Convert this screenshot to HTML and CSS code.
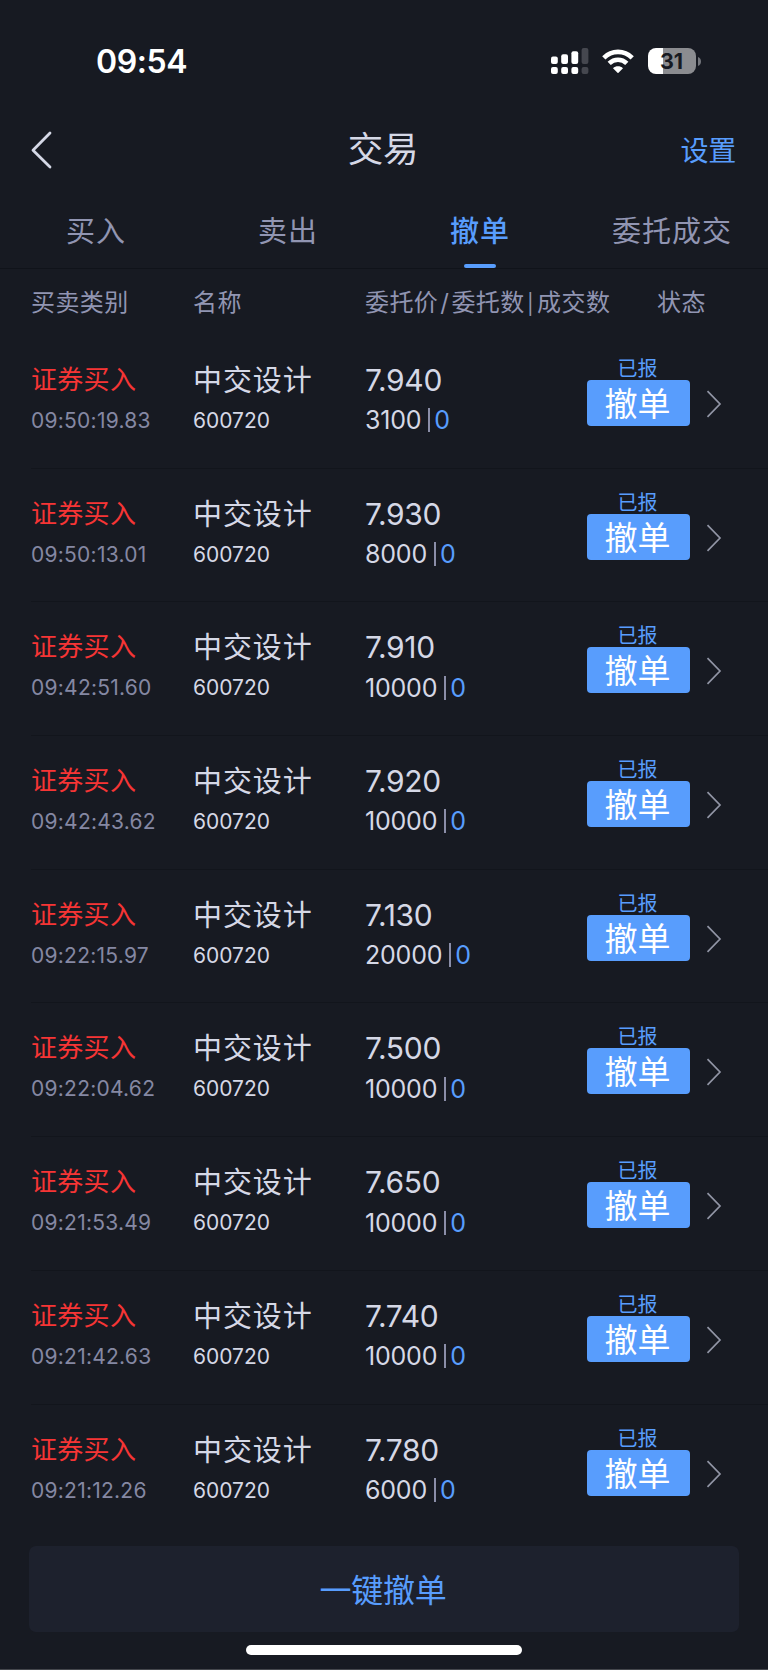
FILE: index.html
```html
<!DOCTYPE html>
<html lang="zh-CN">
<head>
<meta charset="utf-8">
<title>交易</title>
<link rel="stylesheet" href="styles.css">
</head>
<body>
<svg class="defs" width="0" height="0"><symbol id="next" viewBox="0 0 16 28"><path d="M1.5 1.2 14 14 1.5 26.8" fill="none" stroke="currentColor" stroke-width="1.7"/></symbol></svg>
<div class="screen">
  <header class="status">
    <span class="clock">09:54</span>
    <svg class="signal" width="38" height="27" viewBox="0 0 38 27" fill="#fff">
      <rect x="0" y="8.5" width="6.8" height="7.5" rx="2"/><rect x="10.2" y="6.3" width="6.8" height="9.7" rx="2"/><rect x="20.4" y="3.2" width="6.8" height="12.8" rx="2"/>
      <rect x="0" y="19" width="6.8" height="7" rx="2"/><rect x="10.2" y="19" width="6.8" height="7" rx="2"/><rect x="20.4" y="19" width="6.8" height="7" rx="2"/>
      <g fill="#45474f"><rect x="30.6" y="0" width="6.8" height="16" rx="2"/><rect x="30.6" y="19" width="6.8" height="7" rx="2"/></g>
    </svg>
    <svg class="wifi" width="32" height="25" viewBox="0 0 32 25">
      <g fill="none" stroke="#fff" stroke-width="4.6"><path d="M1.8 8.8C9.8 .9 22.2 .9 30.2 8.8"/><path d="M7.2 14.4C12.2 9.6 19.8 9.6 24.8 14.4"/></g>
      <path d="M11 19.2C13.8 16.6 18.2 16.6 21 19.2L16.5 23.8Q16 24.2 15.5 23.8Z" fill="#fff"/>
    </svg>
    <div class="battery"><span class="level">31</span><svg width="3" height="9" viewBox="0 0 3 9"><path d="M0 0C4 1.5 4 7.5 0 9Z" fill="#74767c"/></svg></div>
  </header>
  <nav class="bar">
    <svg class="back" width="22" height="38" viewBox="0 0 22 38"><path d="M19 2 2 19.2 19 36" fill="none" stroke="#d5d8e6" stroke-width="2.8" stroke-linecap="round" stroke-linejoin="round"/></svg>
    <h1>交易</h1>
    <a class="settings">设置</a>
  </nav>
  <div class="tabs"><span>买入</span><span>卖出</span><span class="active">撤单</span><span>委托成交</span></div>
  <div class="head cols"><span>买卖类别</span><span>名称</span><span>委托价<i>/</i>委托数<i class="pipe">|</i>成交数</span><span class="state">状态</span></div>
  <main class="list">
    <div class="row cols"><div><b class="type">证券买入</b><span class="time">09:50:19.83</span></div><div><b class="name">中交设计</b><span class="code">600720</span></div><div><b class="price">7.940</b><span class="qty">3100<i></i><em>0</em></span></div><div class="action"><span>已报</span><button>撤单</button></div><svg class="next"><use href="#next"/></svg></div>
    <div class="row cols"><div><b class="type">证券买入</b><span class="time">09:50:13.01</span></div><div><b class="name">中交设计</b><span class="code">600720</span></div><div><b class="price">7.930</b><span class="qty">8000<i></i><em>0</em></span></div><div class="action"><span>已报</span><button>撤单</button></div><svg class="next"><use href="#next"/></svg></div>
    <div class="row cols"><div><b class="type">证券买入</b><span class="time">09:42:51.60</span></div><div><b class="name">中交设计</b><span class="code">600720</span></div><div><b class="price">7.910</b><span class="qty">10000<i></i><em>0</em></span></div><div class="action"><span>已报</span><button>撤单</button></div><svg class="next"><use href="#next"/></svg></div>
    <div class="row cols"><div><b class="type">证券买入</b><span class="time">09:42:43.62</span></div><div><b class="name">中交设计</b><span class="code">600720</span></div><div><b class="price">7.920</b><span class="qty">10000<i></i><em>0</em></span></div><div class="action"><span>已报</span><button>撤单</button></div><svg class="next"><use href="#next"/></svg></div>
    <div class="row cols"><div><b class="type">证券买入</b><span class="time">09:22:15.97</span></div><div><b class="name">中交设计</b><span class="code">600720</span></div><div><b class="price">7.130</b><span class="qty">20000<i></i><em>0</em></span></div><div class="action"><span>已报</span><button>撤单</button></div><svg class="next"><use href="#next"/></svg></div>
    <div class="row cols"><div><b class="type">证券买入</b><span class="time">09:22:04.62</span></div><div><b class="name">中交设计</b><span class="code">600720</span></div><div><b class="price">7.500</b><span class="qty">10000<i></i><em>0</em></span></div><div class="action"><span>已报</span><button>撤单</button></div><svg class="next"><use href="#next"/></svg></div>
    <div class="row cols"><div><b class="type">证券买入</b><span class="time">09:21:53.49</span></div><div><b class="name">中交设计</b><span class="code">600720</span></div><div><b class="price">7.650</b><span class="qty">10000<i></i><em>0</em></span></div><div class="action"><span>已报</span><button>撤单</button></div><svg class="next"><use href="#next"/></svg></div>
    <div class="row cols"><div><b class="type">证券买入</b><span class="time">09:21:42.63</span></div><div><b class="name">中交设计</b><span class="code">600720</span></div><div><b class="price">7.740</b><span class="qty">10000<i></i><em>0</em></span></div><div class="action"><span>已报</span><button>撤单</button></div><svg class="next"><use href="#next"/></svg></div>
    <div class="row cols"><div><b class="type">证券买入</b><span class="time">09:21:12.26</span></div><div><b class="name">中交设计</b><span class="code">600720</span></div><div><b class="price">7.780</b><span class="qty">6000<i></i><em>0</em></span></div><div class="action"><span>已报</span><button>撤单</button></div><svg class="next"><use href="#next"/></svg></div>
  </main>
  <footer><button class="all">一键撤单</button><div class="home"></div></footer>
</div>
</body>
</html>
```
FILE: styles.css
```css
* { box-sizing: border-box; margin: 0; padding: 0; }
body { background: #171a22; }
.defs { display: block; }
.screen { width: 768px; height: 1670px; overflow: hidden; display: flex; flex-direction: column; background: #171a22; border-bottom: 1px solid #45474d; color: #d5d8e6; font-family: Inter, "Noto Sans CJK SC", sans-serif; font-weight: 400; }
b, i, em, h1 { font-weight: inherit; font-style: normal; }
button { border: 0; font-family: inherit; }

.status { height: 104px; padding: 48px 67px 0 96px; display: flex; align-items: flex-start; color: #fff; }
.clock { font-size: 32px; line-height: 28px; font-weight: 600; letter-spacing: -.4px; margin-right: auto; }
.signal { margin-right: 13.5px; }
.wifi { margin: 1px 14px 0 0; }
.battery { display: flex; align-items: center; gap: 2px; }
.level { width: 48px; height: 26px; border-radius: 8px; background: linear-gradient(90deg, #fff 15px, #8b8c90 15px); color: #171a22; font-size: 21.5px; line-height: 27px; font-weight: 700; text-align: center; padding-right: 1px; }

.bar { height: 92px; padding: 0 32px 0 31px; display: grid; grid-template-columns: 1fr auto 1fr; align-items: center; }
.bar h1 { font-size: 35.5px; line-height: 44px; letter-spacing: -.3px; position: relative; left: -.5px; }
.settings { justify-self: end; font-size: 28px; line-height: 36px; padding-top: 1px; letter-spacing: -.3px; color: #589dfd; }

.tabs { height: 73px; flex: none; display: grid; grid-template-columns: repeat(4, 1fr); border-bottom: 1px solid #10131a; text-align: center; color: #9195b2; font-size: 29px; line-height: 68px; letter-spacing: 1px; }
.tabs span { display: flex; flex-direction: column; align-items: center; height: 73px; padding-top: 2px; }
.tabs .active { color: #589dfd; font-weight: 500; }
.active::after { content: ""; width: 32px; height: 4px; border-radius: 2px; background: #589dfd; margin-top: -2px; }

.cols { display: grid; grid-template-columns: 162px 173px 221px 106px 1fr; padding-left: 31px; }
.head { height: 66px; flex: none; color: #9195b2; font-size: 24px; line-height: 67px; letter-spacing: .4px; white-space: nowrap; }
.head i { padding: 0 2.2px 0 2px; }
.head .pipe { font-size: 20px; padding: 0 3px 0 2.4px; }
.head span:nth-child(3) { margin-left: -1px; }
.head .state { padding-left: 70px; }

.row { height: 133.7px; position: relative; align-items: start; }
.row::after { content: ""; position: absolute; left: 31px; right: 0; bottom: 0; height: 1px; background: #12151c; }
.row:last-child::after { display: none; }
.row b, .row div > span { display: block; white-space: nowrap; }
.type { color: #f63535; font-size: 26px; line-height: 36px; letter-spacing: .3px; padding-top: 27px; }
.name { font-size: 29px; line-height: 36px; letter-spacing: .9px; padding-top: 28px; }
.price { font-size: 30px; line-height: 36px; letter-spacing: -.3px; padding-top: 27px; margin-left: -1px; }
.time { color: #8588a3; font-size: 21px; line-height: 26px; letter-spacing: .25px; padding-top: 10px; }
.code { font-size: 21px; line-height: 26px; padding-top: 9px; }
.row .qty { display: flex; align-items: center; font-size: 25px; line-height: 26px; letter-spacing: -.2px; padding-top: 9.4px; margin-left: -1px; }
.qty i { width: 2px; height: 24px; background: #8b8ea8; margin: 0 4px 0 7px; }
.qty em { color: #589dfd; }
.action { width: 103px; padding-top: 21px; text-align: center; }
.action span { color: #589dfd; font-size: 20px; line-height: 26px; height: 24px; text-indent: -2px; }
.action button { display: block; width: 103px; height: 46px; border-radius: 4px; background: #589dfd; color: #fff; font-size: 33px; line-height: 46px; padding: 1px 2px 0 0; }
.next { width: 16px; height: 28px; color: #9195a5; margin: 55px 0 0 13px; }

footer { padding: 8px 29px 0; display: flex; flex-direction: column; align-items: center; }
.all { width: 710px; height: 86px; border-radius: 7px; background: #1d212d; color: #589dfd; font-size: 32px; letter-spacing: -.3px; padding: 0 2px 2px 0; }
.home { width: 276px; height: 10px; border-radius: 5px; background: #fff; margin-top: 12.8px; }
```
